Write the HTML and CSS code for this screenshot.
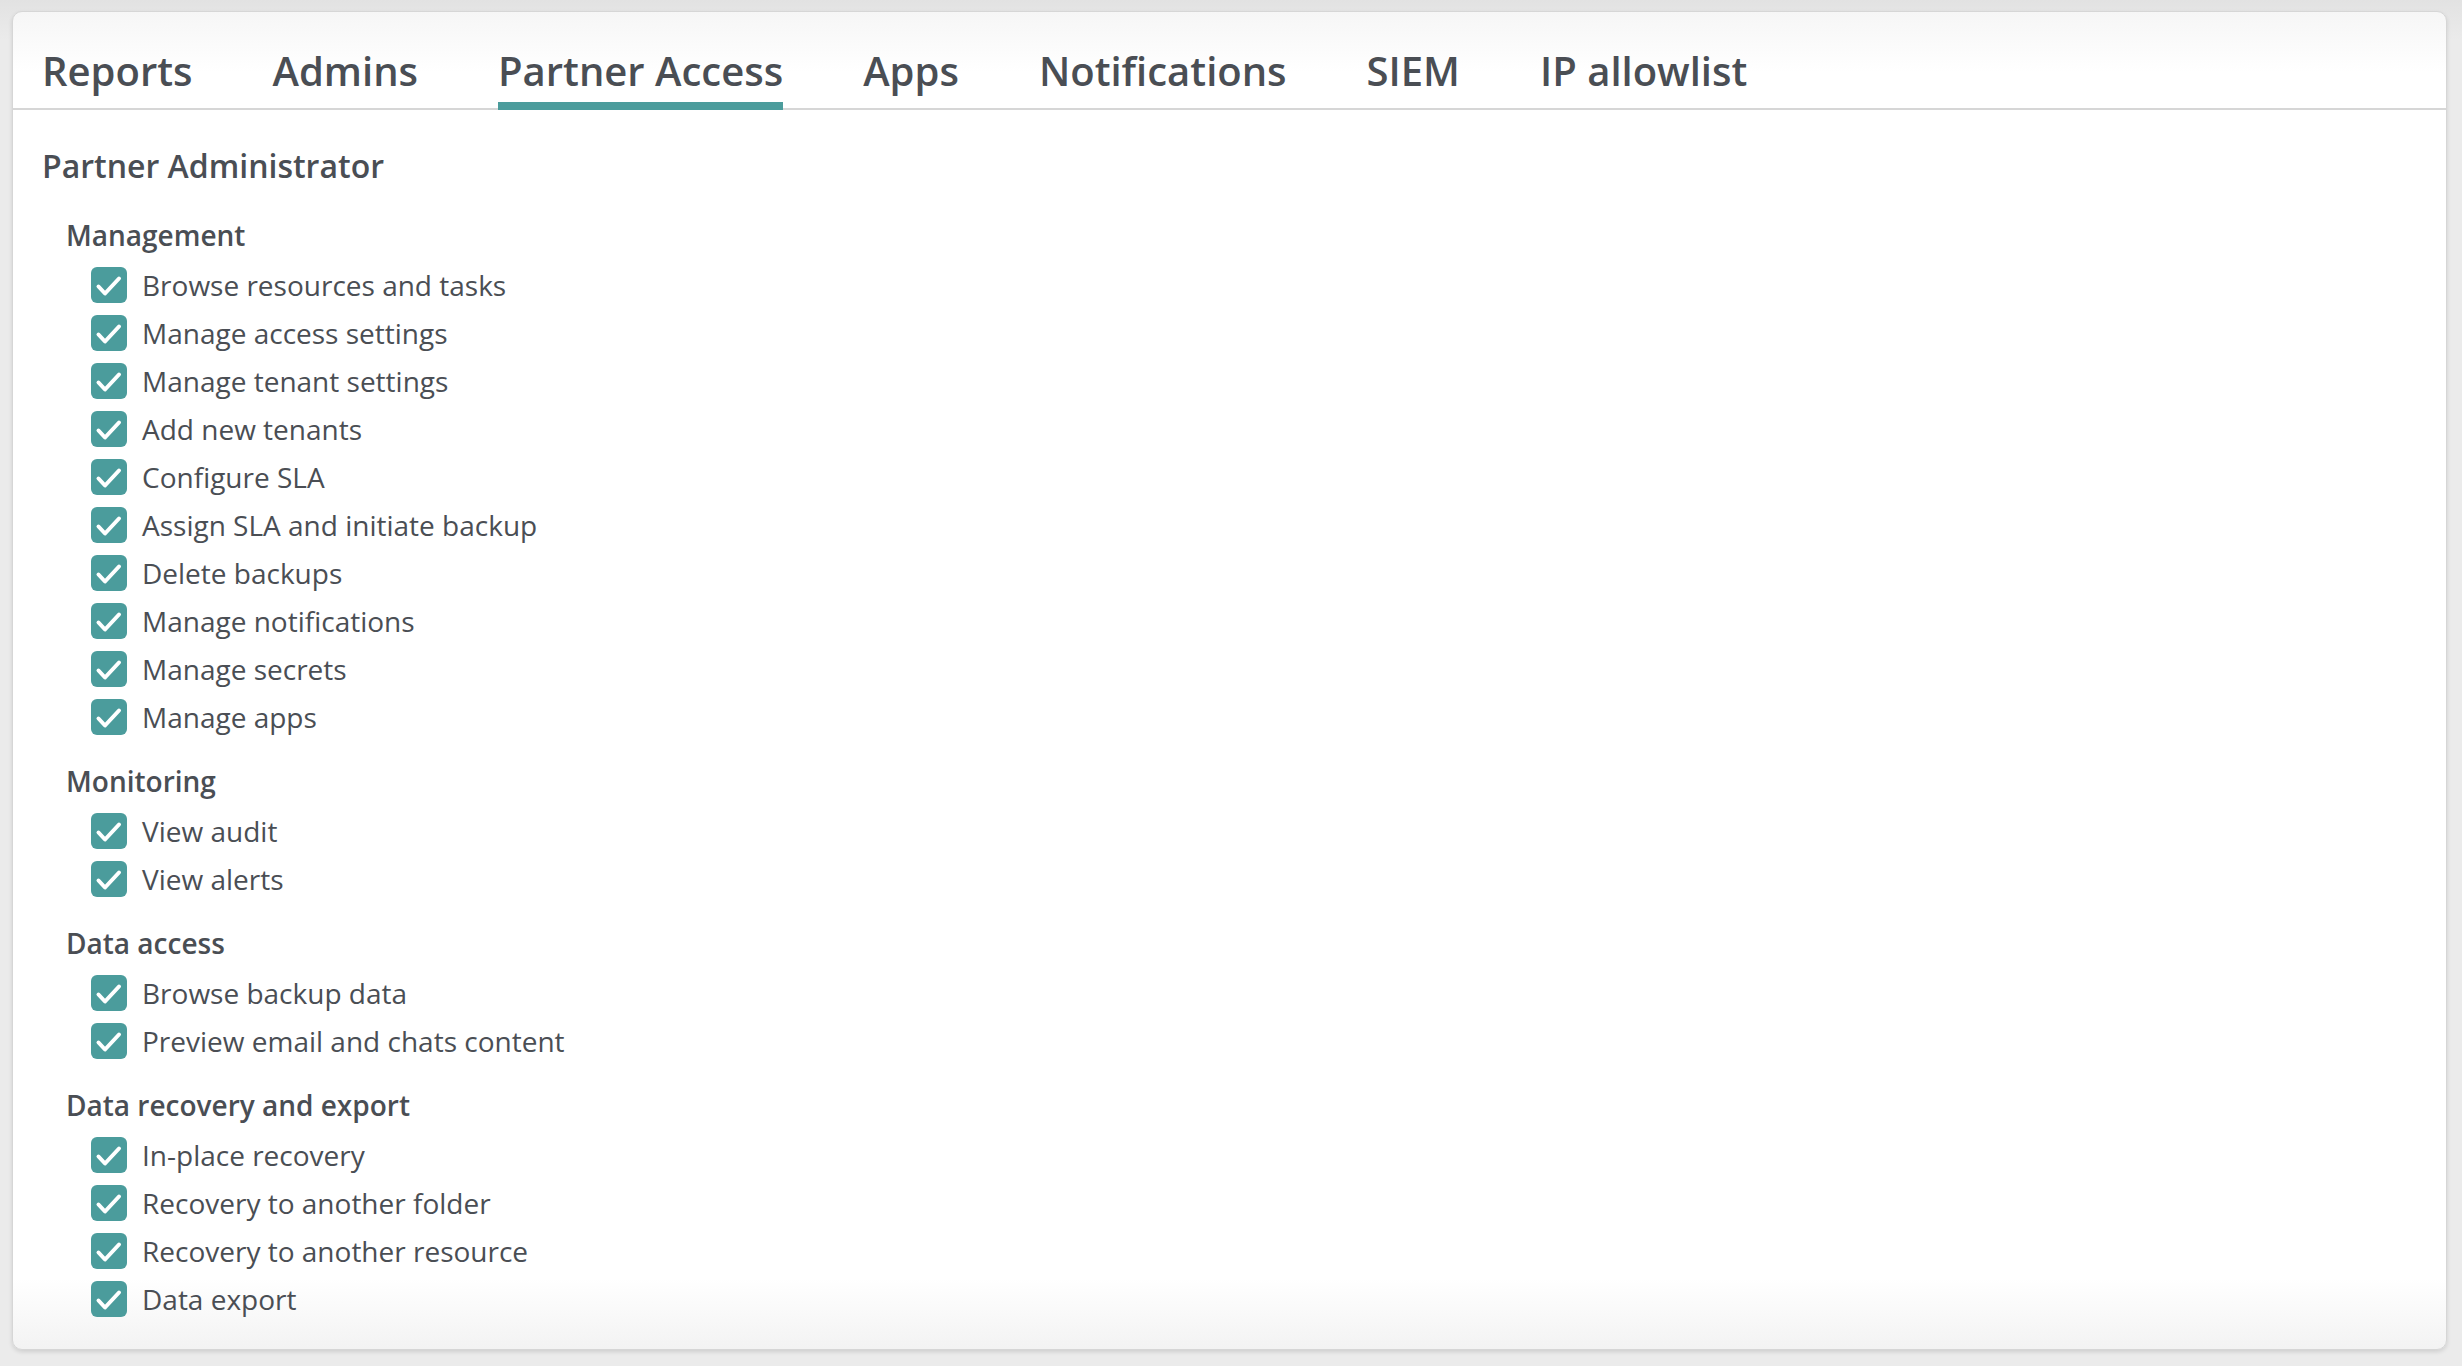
FILE: index.html
```html
<!doctype html>
<html>
	<head>
		<meta http-equiv="Content-Type" content="text/html; charset=utf-8" />
		<meta name="viewport" content="width=device-width, initial-scale=1.0" />
		<title>Partner Access</title>
		<link rel="stylesheet" href="styles.css">
	</head>
	<body>
		<article class="class___card">
			<nav class="class___tabs">
				<span class="class___tab">Reports</span>
				<span class="class___tab">Admins</span>
				<span class="class___tab class___tab_active">Partner Access</span>
				<span class="class___tab">Apps</span>
				<span class="class___tab">Notifications</span>
				<span class="class___tab">SIEM</span>
				<span class="class___tab">IP allowlist</span>
			</nav>
			<section class="class___body">
				<h2>Partner Administrator</h2>
				<div class="class___group">
					<h3>Management</h3>
					<div class="class___item"><span class="class___check"><svg viewBox="0 0 36 36"><polyline points="7.5,19.5 14,26.5 28,11.5"/></svg></span>Browse resources and tasks</div>
					<div class="class___item"><span class="class___check"><svg viewBox="0 0 36 36"><polyline points="7.5,19.5 14,26.5 28,11.5"/></svg></span>Manage access settings</div>
					<div class="class___item"><span class="class___check"><svg viewBox="0 0 36 36"><polyline points="7.5,19.5 14,26.5 28,11.5"/></svg></span>Manage tenant settings</div>
					<div class="class___item"><span class="class___check"><svg viewBox="0 0 36 36"><polyline points="7.5,19.5 14,26.5 28,11.5"/></svg></span>Add new tenants</div>
					<div class="class___item"><span class="class___check"><svg viewBox="0 0 36 36"><polyline points="7.5,19.5 14,26.5 28,11.5"/></svg></span>Configure SLA</div>
					<div class="class___item"><span class="class___check"><svg viewBox="0 0 36 36"><polyline points="7.5,19.5 14,26.5 28,11.5"/></svg></span>Assign SLA and initiate backup</div>
					<div class="class___item"><span class="class___check"><svg viewBox="0 0 36 36"><polyline points="7.5,19.5 14,26.5 28,11.5"/></svg></span>Delete backups</div>
					<div class="class___item"><span class="class___check"><svg viewBox="0 0 36 36"><polyline points="7.5,19.5 14,26.5 28,11.5"/></svg></span>Manage notifications</div>
					<div class="class___item"><span class="class___check"><svg viewBox="0 0 36 36"><polyline points="7.5,19.5 14,26.5 28,11.5"/></svg></span>Manage secrets</div>
					<div class="class___item"><span class="class___check"><svg viewBox="0 0 36 36"><polyline points="7.5,19.5 14,26.5 28,11.5"/></svg></span>Manage apps</div>
				</div>
				<div class="class___group">
					<h3>Monitoring</h3>
					<div class="class___item"><span class="class___check"><svg viewBox="0 0 36 36"><polyline points="7.5,19.5 14,26.5 28,11.5"/></svg></span>View audit</div>
					<div class="class___item"><span class="class___check"><svg viewBox="0 0 36 36"><polyline points="7.5,19.5 14,26.5 28,11.5"/></svg></span>View alerts</div>
				</div>
				<div class="class___group">
					<h3>Data access</h3>
					<div class="class___item"><span class="class___check"><svg viewBox="0 0 36 36"><polyline points="7.5,19.5 14,26.5 28,11.5"/></svg></span>Browse backup data</div>
					<div class="class___item"><span class="class___check"><svg viewBox="0 0 36 36"><polyline points="7.5,19.5 14,26.5 28,11.5"/></svg></span>Preview email and chats content</div>
				</div>
				<div class="class___group">
					<h3>Data recovery and export</h3>
					<div class="class___item"><span class="class___check"><svg viewBox="0 0 36 36"><polyline points="7.5,19.5 14,26.5 28,11.5"/></svg></span>In-place recovery</div>
					<div class="class___item"><span class="class___check"><svg viewBox="0 0 36 36"><polyline points="7.5,19.5 14,26.5 28,11.5"/></svg></span>Recovery to another folder</div>
					<div class="class___item"><span class="class___check"><svg viewBox="0 0 36 36"><polyline points="7.5,19.5 14,26.5 28,11.5"/></svg></span>Recovery to another resource</div>
					<div class="class___item"><span class="class___check"><svg viewBox="0 0 36 36"><polyline points="7.5,19.5 14,26.5 28,11.5"/></svg></span>Data export</div>
				</div>
			</section>
		</article>
	</body>
</html>
```

FILE: styles.css
```css
html {
	background : #ebebeb;
}
body {
	margin : 0;
	padding : 11px 15px 16px 12px;
	font-family : "Open Sans", "Liberation Sans", sans-serif;
	color : #4a4e54;
	background : linear-gradient(#e2e2e2, #ebebeb 40px);
}
.class___card {
	background : linear-gradient(#f6f6f6, #ffffff 60px, #ffffff calc(100% - 70px), #f3f3f3);
	border : 1px solid #d6d6d6;
	border-radius : 10px;
	box-shadow : 0 2px 4px rgba(0, 0, 0, 0.12);
}
.class___tabs {
	display : flex;
	gap : 80px;
	padding : 32px 29px 0 29px;
	border-bottom : 2px solid #d6d6d6;
}
.class___tab {
	font-size : 40px;
	font-weight : 600;
	line-height : 54px;
	padding-bottom : 4px;
	border-bottom : 8px solid transparent;
	margin-bottom : -2px;
	white-space : nowrap;
}
.class___tab_active {
	border-bottom-color : #4b9c9c;
}
.class___body {
	padding : 34px 29px 26px 29px;
}
.class___body > h2 {
	margin : 0 0 23px 0;
	font-size : 32px;
	font-weight : 600;
	line-height : 44px;
}
.class___group {
	padding-left : 24px;
	margin-top : 16px;
}
.class___body > h2 + .class___group {
	margin-top : 0;
}
.class___group > h3 {
	margin : 0 0 2px 0;
	font-size : 28px;
	font-weight : 600;
	line-height : 48px;
}
.class___item {
	display : flex;
	align-items : center;
	height : 48px;
	padding-left : 25px;
	font-size : 28px;
	line-height : 48px;
}
.class___check {
	display : inline-block;
	width : 36px;
	height : 36px;
	margin-right : 15px;
	background : #4b9c9c;
	border-radius : 6px;
	flex-shrink : 0;
}
.class___check svg {
	display : block;
	width : 36px;
	height : 36px;
}
.class___check polyline {
	fill : none;
	stroke : #ffffff;
	stroke-width : 4;
	stroke-linecap : round;
	stroke-linejoin : round;
}
```
